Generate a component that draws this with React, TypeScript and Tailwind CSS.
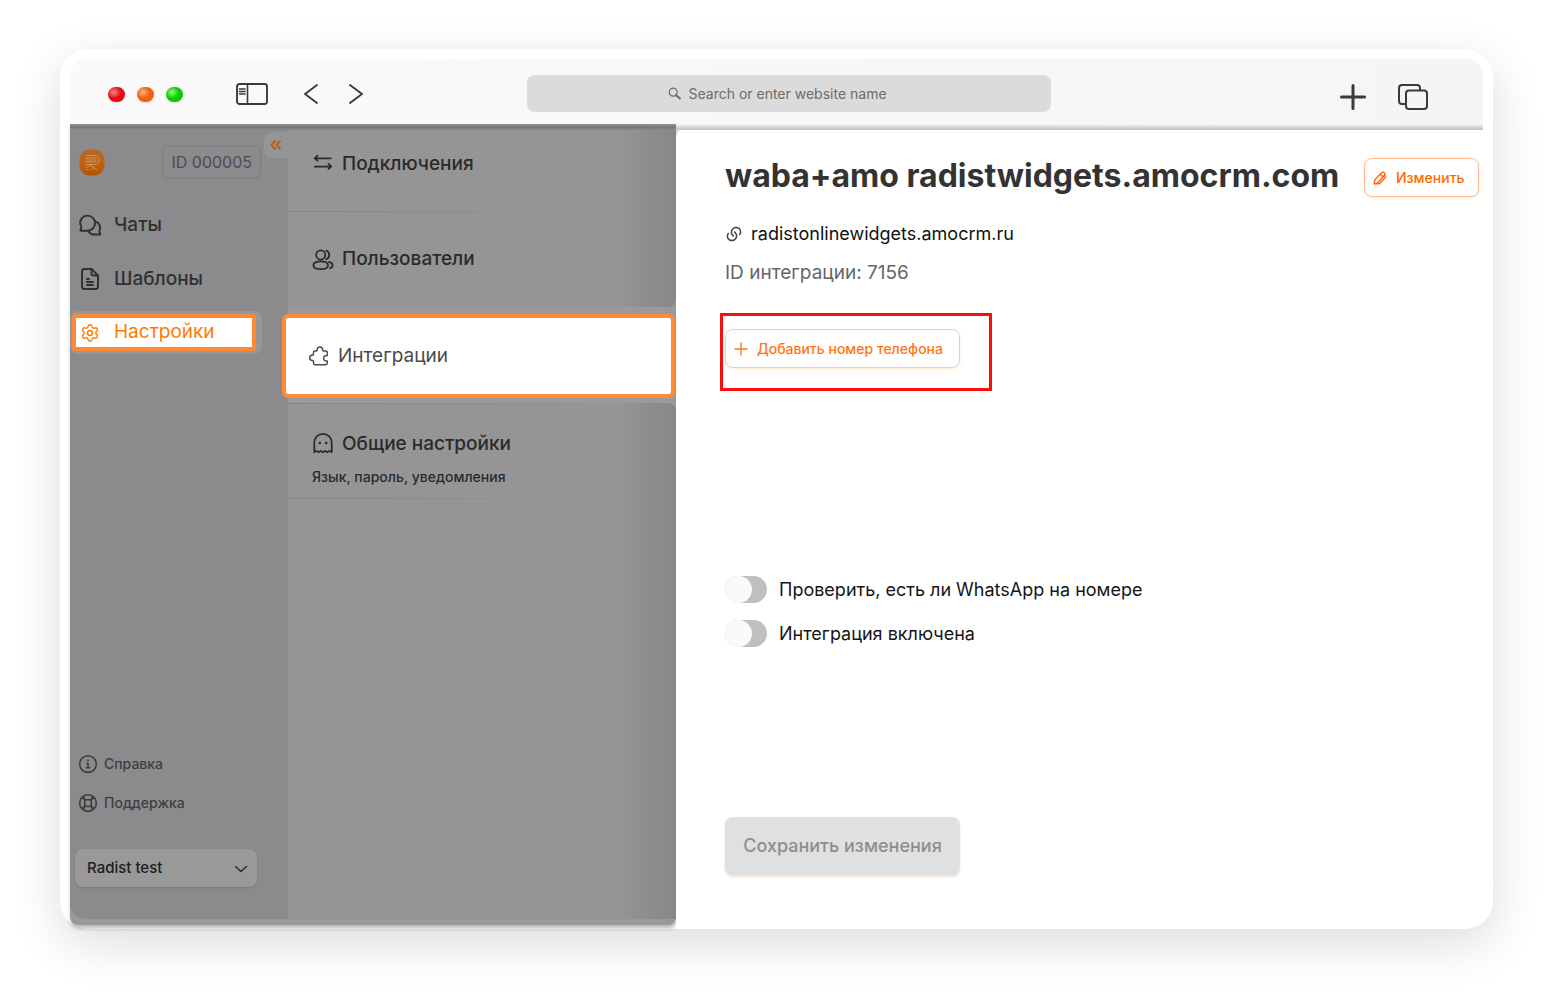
import React from 'react';
import { Settings } from 'lucide-react';
import { RiLinksLine } from 'react-icons/ri';

type IconProps = { className?: string; children: React.ReactNode; box?: string };

const Icon: React.FC<IconProps> = ({ className = 'size-6', children, box = '0 0 24 24' }) => (
  <svg
    viewBox={box}
    className={`shrink-0 ${className}`}
    fill="none"
    stroke="currentColor"
    strokeWidth="1.9"
    strokeLinecap="round"
    strokeLinejoin="round"
    aria-hidden="true"
  >
    {children}
  </svg>
);

const Logo = () => (
  <svg viewBox="0 0 26 27" className="h-[27px] w-[26px] shrink-0" fill="none" aria-hidden="true">
    <defs>
      <linearGradient id="logo" x1="0" y1="0" x2="0" y2="1">
        <stop offset="0" stopColor="#b3672a" />
        <stop offset="0.5" stopColor="#c06414" />
        <stop offset="1" stopColor="#b35400" />
      </linearGradient>
    </defs>
    <rect x="0.5" y="0.5" width="25" height="26" rx="10" fill="url(#logo)" />
    <g stroke="#cf9560" strokeWidth="1" strokeLinecap="round">
      <path d="M7 6.5h8.5a4 4 0 0 1 0 9H7" />
      <path d="M7 9h8a1.8 1.8 0 0 1 0 3.8H7" />
      <path d="M11 16l7 4.500" />
      <path d="M7 18h3M7 20.500h2M12 20.500h2M7 11h7" strokeWidth="0.7" />
    </g>
  </svg>
);

const navItems = [
  {
    label: 'Чаты',
    icon: (
      <Icon className="size-6">
        <path d="M9.6 2.6a7.3 7.3 0 0 0-6.5 10.7c.3.6.3 1 .1 1.6l-.8 2.1c-.2.5 0 .7.5.7h6.7a7.4 7.4 0 0 0 7.4-7.5 7.4 7.4 0 0 0-7.4-7.6Z" />
        <path d="M17.2 8.5a6.4 6.4 0 0 1 4.3 9c-.2.5-.2.8 0 1.3l.7 1.9c.2.5 0 .8-.5.8h-5.900a6.500 6.500 0 0 1-5.500-3.700" />
      </Icon>
    ),
  },
  {
    label: 'Шаблоны',
    icon: (
      <Icon className="size-6">
        <path d="M13.500 2H6.500a2.500 2.500 0 0 0-2.500 2.500v15A2.500 2.500 0 0 0 6.500 22h11a2.500 2.500 0 0 0 2.500-2.500V8.500Z" />
        <path d="M13.500 2v4.500a2 2 0 0 0 2 2H20M9 12h2M9 15h6M9 18h6" />
      </Icon>
    ),
  },
];

const Sidebar = () => (
  <aside className="flex w-[218px] shrink-0 flex-col rounded-bl-2xl bg-[#8b8b8d] text-[#303032]">
    <div className="flex items-start justify-between pl-[9px] pt-[2px]">
      <div className="flex flex-1 items-center justify-between pr-[3px] pt-[14px]">
        <Logo />
        <span className="rounded-md border border-[#7d7d7f] px-2 text-base leading-[31px] text-[#4c4c4f]">ID 000005</span>
      </div>
      <button type="button" aria-label="Свернуть" className="flex h-[26px] w-6 items-center justify-center rounded-l-lg bg-[#959595] text-[#b85f1c]">
        <Icon className="size-4" box="0 0 16 16">
          <path d="M7 4 3.500 8 7 12M12 4 8.500 8l3.500 4" />
        </Icon>
      </button>
    </div>

    <nav className="mt-[19px] flex flex-col text-[19px] font-medium">
      {navItems.map((item) => (
        <a key={item.label} href="#" className="flex h-[54px] items-center gap-3 pl-2">
          {item.icon}
          {item.label}
        </a>
      ))}
      <a href="#" className="mt-[5px] flex h-[43px] w-[192px] items-center rounded-lg bg-[#979799]">
        <span className="ml-[2px] flex h-[37px] w-[184px] items-center gap-[14px] rounded-sm border-4 border-[#ff8a35] bg-white pl-[4px] font-normal text-[#ff7a00]">
          <Settings className="size-5" strokeWidth={1.7} />
          Настройки
        </span>
      </a>
    </nav>

    <div className="mt-auto flex flex-col gap-[19px] pl-2 text-sm font-medium leading-5 text-[#3e3e40]">
      <a href="#" className="flex items-center gap-[6px]">
        <Icon className="size-5">
          <circle cx="12" cy="12" r="10" />
          <path d="M10.500 11H12v5.500M10 16.500h4" />
          <path d="M12 7.500h.01" strokeWidth="2.600" />
        </Icon>
        Справка
      </a>
      <a href="#" className="flex items-center gap-[6px]">
        <Icon className="size-5">
          <circle cx="12" cy="12" r="10" />
          <rect x="8" y="8" width="8" height="8" rx="2" />
          <path d="M5 5.500 8.500 9M19 5.500 15.500 9M5 18.500 8.500 15M19 18.500 15.500 15M7 4.500c1 2 1.200 2.500 1.200 4M17 4.500c-1 2-1.200 2.500-1.200 4M7 19.500c1-2 1.200-2.500 1.200-4M17 19.500c-1-2-1.200-2.500-1.200-4" strokeWidth="1.600" />
        </Icon>
        Поддержка
      </a>
    </div>

    <div className="relative mb-8 ml-[5px] mt-9 w-[182px]">
      <select aria-label="Проект" className="h-[38px] w-full appearance-none rounded-lg bg-[#999999] pl-3 text-[15px] font-medium text-[#202020] shadow-sm">
        <option>Radist test</option>
      </select>
      <Icon className="pointer-events-none absolute right-2 top-3 size-4" box="0 0 16 16">
        <path d="m2.500 5.500 5.500 5 5.500-5" strokeWidth="1.600" />
      </Icon>
    </div>
  </aside>
);

const SettingsMenu = () => (
  <section className="flex w-[388px] shrink-0 flex-col bg-[#9a9a9a] text-[19px] font-medium text-[#2a2a2a]">
    <div className="flex flex-col rounded-br-lg bg-linear-to-r from-[#959595] from-85% to-[#878787]">
      <a href="#" className="flex h-[81px] items-start gap-2 pl-6 pt-[21px]">
        <Icon className="size-[22px]">
          <path d="M20.500 8H3M6 5 3 8l3 2.500M3 17h18M18 14l3 3-3 2.500" />
        </Icon>
        <span className="leading-[26px]">Подключения</span>
      </a>
      <div className="h-px bg-linear-to-r from-[#868686] to-transparent to-85%" />
      <a href="#" className="flex h-[95px] items-center gap-2 pl-6">
        <Icon className="size-[22px]">
          <circle cx="9.500" cy="6.500" r="5" />
          <path d="M15.500 1.800a5 5 0 0 1 0 9.400M9.500 13.500c-5 0-8 1.500-8 4.200s3 4.300 8 4.300 8-1.500 8-4.300-3-4.200-8-4.200ZM18.500 14c2.500.6 4 1.900 4 3.700s-1 2.700-3 3.300" />
        </Icon>
        Пользователи
      </a>
    </div>

    <a href="#" className="relative -ml-[6px] mr-px mt-[7px] flex h-[84px] items-center gap-2 rounded-md border-4 border-[#ff8a35] bg-white pl-[22px] font-normal text-[#4a4a4a]">
      <Icon className="size-[22px]">
        <path d="M7.500 21.500h12c1 0 1.500-.5 1.500-1.500v-2.500c-2.500.3-4-1-4-3s1.500-3.200 4-3V8c0-1-.5-1.500-1.500-1.500H17c-.6 0-1-.3-1-1 0-2-1.200-3.300-3-3.300s-3 1.300-3 3.300c0 .7-.4 1-1 1H7.500C6.500 6.500 6 7 6 8v2c0 .7-.3 1-1 1-2 0-3.200 1.300-3.200 3s1.200 3 3.200 3c.7 0 1 .3 1 1v2c0 1 .5 1.500 1.500 1.500Z" strokeWidth="1.600" />
      </Icon>
      Интеграции
    </a>

    <div className="mt-[5px] flex flex-1 flex-col rounded-tr-lg bg-linear-to-r from-[#959595] from-85% to-[#878787]">
      <div className="h-px bg-linear-to-r from-[#868686] to-transparent to-85%" />
      <a href="#" className="flex h-[94px] flex-col gap-[10px] pl-6 pt-[27px]">
        <span className="flex items-center gap-2 leading-[26px]">
          <Icon className="size-[22px]">
            <path d="M2.500 21V10.500a9.500 9.500 0 0 1 19 0V21l-2.500-1.500-2.300 1.500-2.400-1.500-2.300 1.500-2.300-1.500-2.400 1.500L5 19.500Z" />
            <path d="M8.500 11h.01M15.500 11h.01" strokeWidth="2.800" />
          </Icon>
          Общие настройки
        </span>
        <span className="text-sm leading-5">Язык, пароль, уведомления</span>
      </a>
      <div className="h-px bg-linear-to-r from-[#868686] to-transparent to-85%" />
    </div>
  </section>
);

const Toggle: React.FC<{ label: string }> = ({ label }) => (
  <label className="flex items-center gap-3 text-lg leading-[27px] text-[#161616]">
    <input
      type="checkbox"
      role="switch"
      className="flex h-[27px] w-[42px] shrink-0 appearance-none rounded-full bg-[#bfbfbf] before:size-[27px] before:rounded-full before:bg-[#fafafa] before:content-['']"
    />
    {label}
  </label>
);

const Integration = () => (
  <main className="min-w-0 flex-1 rounded-br-[28px] rounded-tl-lg bg-white pb-[54px] pl-[49px] pr-1 pt-7">
    <div className="flex items-start justify-between">
      <h1 className="whitespace-nowrap text-[32px] font-bold leading-9 text-[#333333]">waba+amo radistwidgets.amocrm.com</h1>
      <button type="button" className="flex h-[39px] w-[115px] items-center gap-2 rounded-lg border border-[#ffb98a] pl-[7px] text-sm font-medium text-[#ff6a00] shadow-sm shadow-orange-100">
        <Icon className="size-4" box="0 0 16 16">
          <path d="M2 14l.8-4L9.500 2.800c.9-.9 1.900-.8 2.800 0s.9 1.800 0 2.700L5.800 12.800 2 14ZM8.300 4.300l2.800 2.700M12.800 5.300c1 .8 1 1.800 0 2.800l-5 5.400-3 .4" strokeWidth="1.400" />
        </Icon>
        Изменить
      </button>
    </div>

    <div className="mt-6 flex items-center gap-2 text-lg leading-[26px] text-[#111111]">
      <RiLinksLine className="size-[18px] text-[#444444]" />
      <a href="#">radistonlinewidgets.amocrm.ru</a>
    </div>
    <p className="mt-[13px] text-[19px] leading-[26px] text-[#666666]">ID интеграции: 7156</p>

    <div className="-ml-[5px] mt-[27px] h-[78px] w-[272px] border-3 border-[#fb0d0d] pl-[2px] pt-[13px]">
      <button type="button" className="flex h-[39px] w-[235px] items-center gap-2 rounded-lg border border-[#ffc9a3] pl-[7px] text-sm font-medium text-[#ff7410] shadow-sm shadow-orange-100">
        <Icon className="size-4" box="0 0 16 16">
          <path d="M8 2v12M2 8h12" strokeWidth="1.300" />
        </Icon>
        Добавить номер телефона
      </button>
    </div>

    <div className="mt-[185px] flex flex-col gap-[17px]">
      <Toggle label="Проверить, есть ли WhatsApp на номере" />
      <Toggle label="Интеграция включена" />
    </div>

    <button
      type="button"
      disabled
      className="mt-[170px] h-[58px] w-[235px] rounded-lg bg-[#e0e0e0] text-lg font-medium text-[#8e8e8e] shadow-[0_2px_3px_#f3dfcf]"
    >
      Сохранить изменения
    </button>
  </main>
);

const Toolbar = () => (
  <header className="grid h-[65px] grid-cols-[457px_1fr_432px] items-center rounded-t-2xl bg-linear-to-r from-[#fafafa] to-[#f5f5f5] pt-1 text-[#3a3a3a]">
    <div className="flex items-center pl-[38px] pt-px">
      <div className="flex gap-3">
        <span className="h-[15px] w-[17px] rounded-full bg-radial-[at_35%_35%] from-[#ff8a8a] to-[#e50914] to-45% shadow-sm" />
        <span className="h-[15px] w-[17px] rounded-full bg-radial-[at_35%_35%] from-[#ffb080] to-[#f2600c] to-45% shadow-sm" />
        <span className="h-[15px] w-[17px] rounded-full bg-radial-[at_35%_35%] from-[#8aff7a] to-[#0fc800] to-45% shadow-sm" />
      </div>
      <button type="button" aria-label="Боковая панель" className="ml-[53px]">
        <Icon className="h-[22px] w-8" box="0 0 32 22">
          <rect x="1" y="1" width="30" height="20" rx="2.500" />
          <path d="M11.500 1v20M3.500 6h5.500M3.500 8.500h5.500M3.500 11h5.500" strokeWidth="1.600" />
        </Icon>
      </button>
      <button type="button" aria-label="Назад" className="ml-[35px]">
        <Icon className="h-[22px] w-4" box="0 0 16 22">
          <path d="M14 2 2 11l12 9" />
        </Icon>
      </button>
      <button type="button" aria-label="Вперёд" className="ml-[29px]">
        <Icon className="h-[22px] w-4" box="0 0 16 22">
          <path d="m2 2 12 9-12 9" />
        </Icon>
      </button>
    </div>

    <label className="flex h-[37px] items-center justify-center gap-2 rounded-lg bg-[#dbdbdb] pr-3">
      <Icon className="size-[13px] text-[#6c6c6c]" box="0 0 13 13">
        <circle cx="5.200" cy="5.200" r="4" strokeWidth="1.200" />
        <path d="m8.500 8.500 3.500 3" />
      </Icon>
      <input
        type="text"
        aria-label="Search"
        placeholder="Search or enter website name"
        className="w-[210px] bg-transparent text-sm leading-5 outline-none placeholder:text-[#6c6c6c]"
      />
    </label>

    <div className="flex items-center justify-end gap-8 pr-[55px] pt-[6px]">
      <button type="button" aria-label="Новая вкладка">
        <Icon className="size-[26px]" box="0 0 26 26">
          <path d="M13 1.500v23M1.500 13h23" strokeWidth="3" />
        </Icon>
      </button>
      <button type="button" aria-label="Все вкладки">
        <Icon className="h-[26px] w-[30px]" box="0 0 30 26">
          <path d="M22 6V4a3 3 0 0 0-3-3H4a3 3 0 0 0-3 3v13a3 3 0 0 0 3 3h4" strokeWidth="2" />
          <rect x="8" y="6.500" width="21" height="18.500" rx="3" strokeWidth="2" />
        </Icon>
      </button>
    </div>
  </header>
);

const App: React.FC = () => {
  return (
    <div className="bg-white px-[60px] pb-[71px] pt-[49px] font-['Inter','Noto_Sans',sans-serif]">
      <div className="rounded-[28px] bg-white px-[10px] pt-[10px] shadow-[0_14px_50px_rgba(0,0,0,0.14)]">
        <Toolbar />
        <div className="flex">
          <div className="mb-1 flex flex-col rounded-b-lg bg-[#999999] pb-[6px] shadow-[1px_3px_4px_rgba(0,0,0,0.3)]">
            <div className="h-[6px] bg-linear-to-b from-[#969696] via-[#757575] to-[#8c8c8c]" />
            <div className="flex flex-1">
              <Sidebar />
              <SettingsMenu />
            </div>
          </div>
          <div className="flex min-w-0 flex-1 flex-col">
            <div className="h-[6px] bg-linear-to-b from-[#f6f6f6] to-[#bcbcbc]" />
            <Integration />
          </div>
        </div>
      </div>
    </div>
  );
};

export default App;
